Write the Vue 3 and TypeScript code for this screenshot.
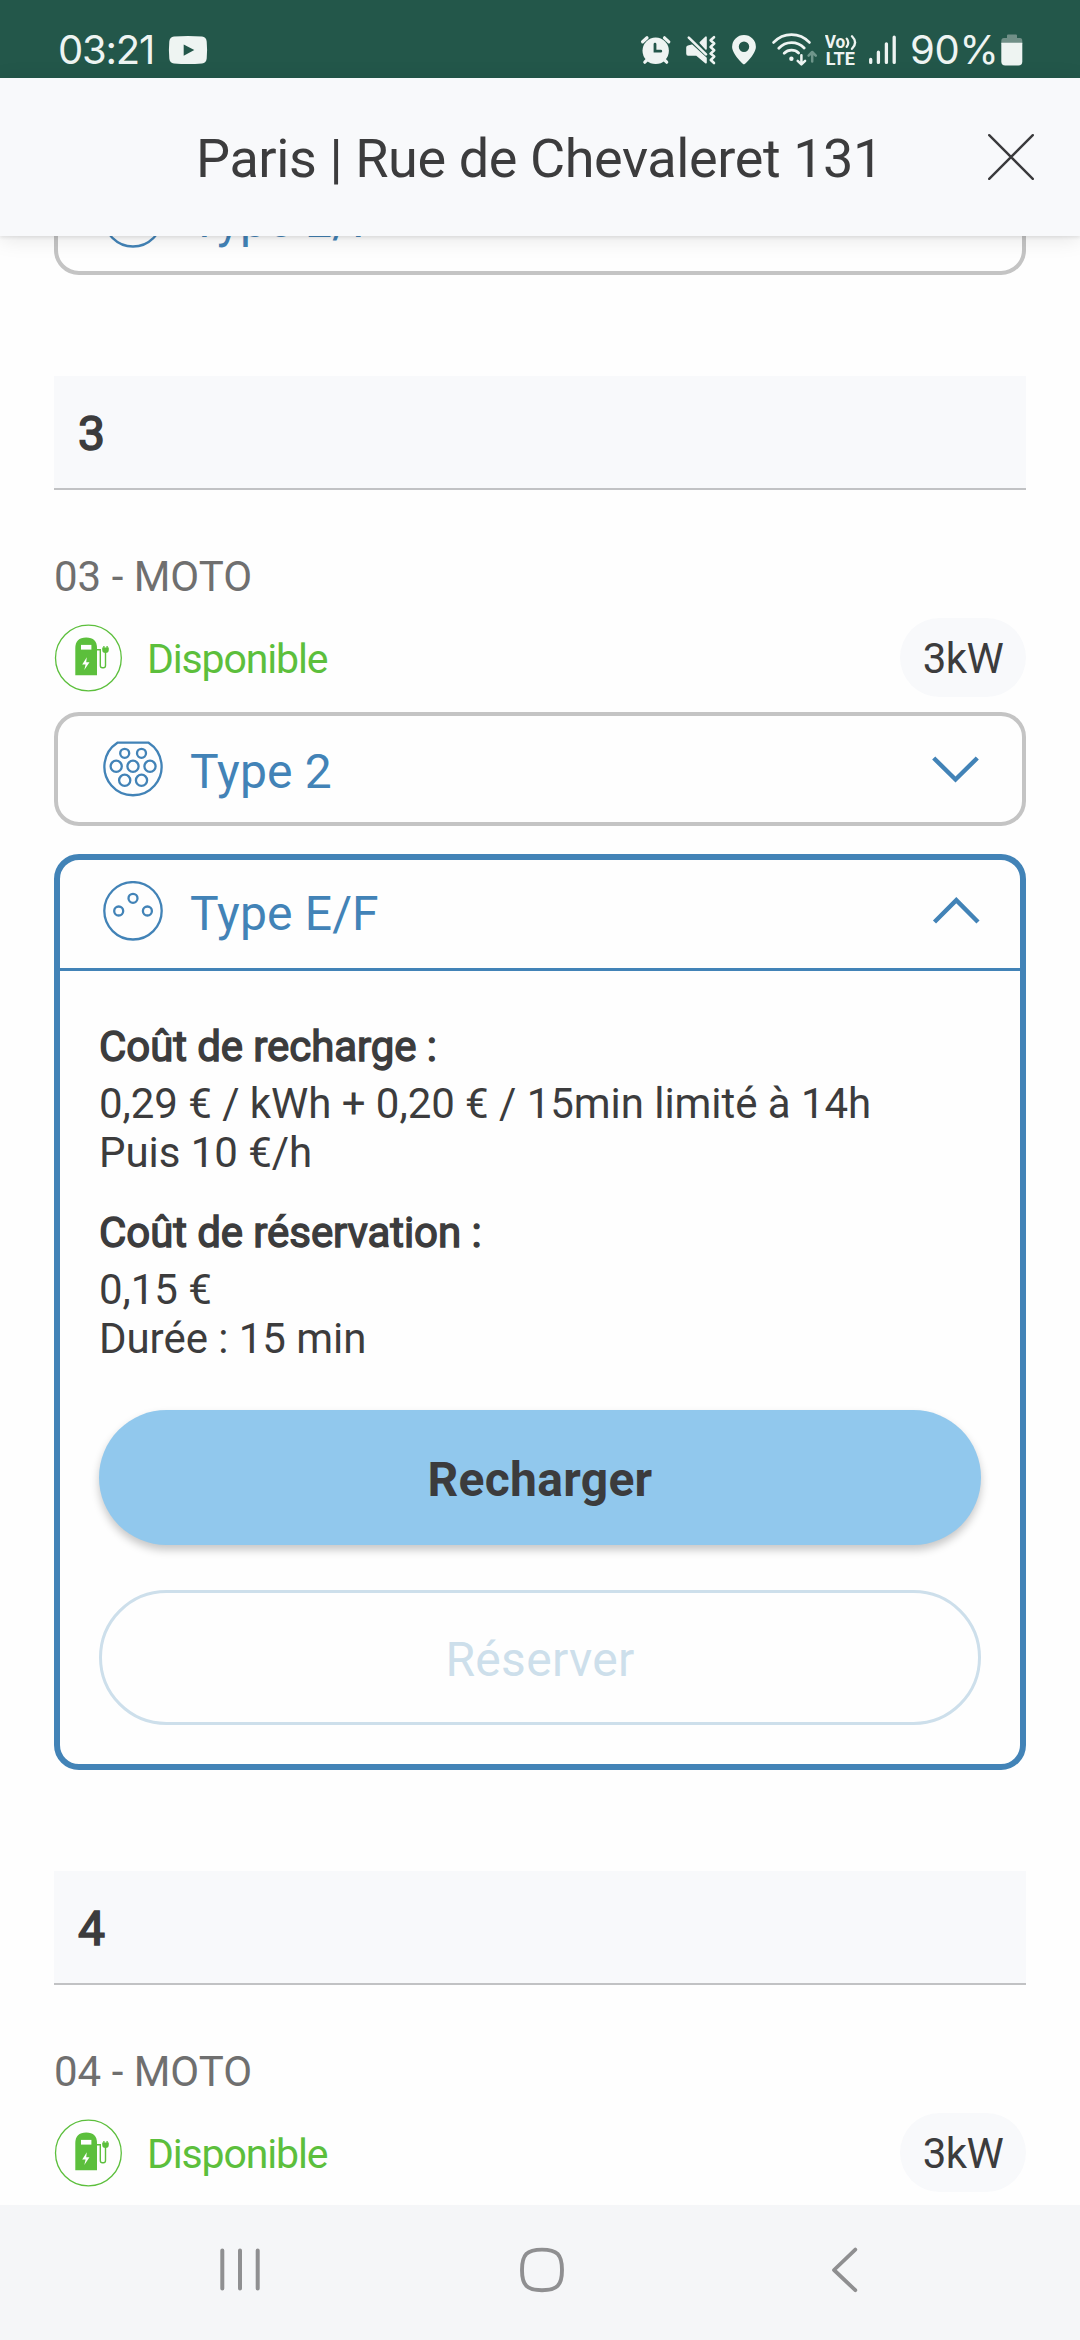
<script setup lang="ts">
import { ref } from 'vue'

interface Connector {
  id: string
  label: string
  kind: 'type2' | 'typeEF'
}

interface Station {
  number: string
  name: string
  status: string
  power: string
  connectors: Connector[]
}

const title = 'Paris | Rue de Chevaleret 131'
const openId = ref('3-ef')

const previous: Connector = { id: '2-ef', label: 'Type E/F', kind: 'typeEF' }

const stations: Station[] = [
  {
    number: '3',
    name: '03 - MOTO',
    status: 'Disponible',
    power: '3kW',
    connectors: [
      { id: '3-t2', label: 'Type 2', kind: 'type2' },
      { id: '3-ef', label: 'Type E/F', kind: 'typeEF' },
    ],
  },
  { number: '4', name: '04 - MOTO', status: 'Disponible', power: '3kW', connectors: [] },
]

function toggle(id: string) {
  openId.value = openId.value === id ? '' : id
}
</script>

<template>
  <div class="screen">
    <div class="statusbar">
      <span class="clock">03:21</span>
      <svg class="yt" width="40" height="30" viewBox="0 0 40 30">
        <path d="M6 1.6Q20 .2 34 1.6Q38.3 2 38.7 6.5Q39.5 15 38.7 23.5Q38.3 28 34 28.4Q20 29.6 6 28.4Q1.7 28 1.3 23.5Q.5 15 1.3 6.5Q1.7 2 6 1.6Z" fill="#eef4f2" />
        <path d="M15.7 9.6L26.3 15L15.7 20.8Z" fill="#23574a" />
      </svg>
      <div class="tray">
        <svg width="32" height="36" viewBox="0 0 32 36" fill="none" stroke="#eef4f2" stroke-linecap="round">
          <circle cx="15.7" cy="18.8" r="13.2" fill="#eef4f2" stroke="none" />
          <path d="M2.6 9.8L7 5.8M24.5 5.8L28.8 9.8M4.8 30.2L8 27M23.5 27L26.7 30.2" stroke-width="3.2" />
          <path d="M15 12.2V19.2H20.8" stroke="#23574a" stroke-width="2.8" />
        </svg>
        <svg class="g13" width="32" height="36" viewBox="0 0 32 36" fill="#eef4f2" stroke="#eef4f2" stroke-linecap="round" stroke-linejoin="round">
          <path d="M3 14.2L7 13.4L21 26V30.8L11.5 23H3Q2 23 2 21.5V15.5Q2 14.4 3 14.2Z" stroke-width="1.6" />
          <path d="M15.3 10.6L21 5.2V17Z" stroke-width="1.6" />
          <path d="M3.8 5.6L21 22.4" fill="none" stroke-width="2.6" />
          <path d="M29 5.2L25.6 8.2L29.2 11.5L25.6 15L29.2 18.2L25.6 21.6L29.2 24.6L25.8 28L29 31" fill="none" stroke-width="2.6" />
        </svg>
        <svg class="g15" width="24" height="36" viewBox="0 0 24 36">
          <path fill-rule="evenodd" fill="#eef4f2" d="M12 32.4C11 32.4 .1 22 .1 14.7A11.9 11.7 0 0 1 23.9 14.7C23.9 22 13 32.4 12 32.4ZM12 9.6A5.2 5.2 0 1 0 12 20A5.2 5.2 0 1 0 12 9.6Z" />
        </svg>
        <svg class="g15" width="46" height="36" viewBox="0 0 46 36" fill="none" stroke="#eef4f2" stroke-width="2.8" stroke-linecap="round" stroke-linejoin="round">
          <path d="M2.6 10.4Q10 2.6 20.5 2.6T38.4 10.4" />
          <path d="M7.8 16.2Q13 10.6 20.5 10.6T33.2 16" />
          <path d="M13.2 21.2Q16.2 18.2 20.5 18.2T27.6 21" />
          <circle cx="20.4" cy="26.7" r="2.2" fill="#eef4f2" stroke="none" />
          <path d="M30.4 23.2V32M26.7 28.8L30.4 32.4L34.1 28.8" stroke-width="2.5" />
          <path d="M41.2 29.6V20.4M37.6 23.6L41.2 20L44.8 23.6" stroke="#6f968b" stroke-width="2.5" />
        </svg>
        <svg class="g8" width="33" height="36" viewBox="0 0 33 36">
          <text x="-0.3" y="16.4" class="volte" textLength="20.6" lengthAdjust="spacingAndGlyphs">Vo</text>
          <text x="0.8" y="33" class="volte" textLength="29" lengthAdjust="spacingAndGlyphs">LTE</text>
          <path d="M21.7 6.6Q24.8 10.6 21.7 14.8M27 4.2Q33.2 10.4 27 16.8" fill="none" stroke="#eef4f2" stroke-width="2.3" stroke-linecap="round" />
        </svg>
        <svg class="g10" width="30" height="36" viewBox="0 0 30 36" stroke="#eef4f2" stroke-width="3.3" stroke-linecap="round">
          <path d="M2.7 27.4V30.4M10.4 20.2V30.4M18.4 11.8V30.4M26.2 5.2V30.4" />
        </svg>
        <span class="percent">90%</span>
        <svg width="22" height="36" viewBox="0 0 22 36">
          <path d="M6 3.5Q6 2.6 7 2.6H15Q16 2.6 16 3.5V6H19Q21.3 6 21.3 9V12H.3V9Q.3 6 3 6H6Z" fill="#708f87" />
          <path d="M.3 10.7H21.3V29.6Q21.3 33.6 17.3 33.6H4.3Q.3 33.6 .3 29.6Z" fill="#eef4f2" />
        </svg>
      </div>
    </div>

    <header class="header">
      <h1 class="title">{{ title }}</h1>
      <svg class="close" width="46" height="46" viewBox="0 0 46 46">
        <path d="M1.2 1.2L44.8 44.8M44.8 1.2L1.2 44.8" stroke="#3a3a3c" stroke-width="2.4" stroke-linecap="round" />
      </svg>
    </header>

    <main class="content">
      <div class="card clipped">
        <div class="card-head">
          <svg class="plug" width="60" height="60" viewBox="0 0 60 60"><circle cx="30" cy="29.8" r="28.7" /></svg>
          <span class="card-label">{{ previous.label }}</span>
        </div>
      </div>

      <section v-for="s in stations" :key="s.number" class="station">
        <h2 class="number">{{ s.number }}</h2>
        <div class="name">{{ s.name }}</div>
        <div class="state">
          <svg class="charger" width="68" height="68" viewBox="0 0 68 68" fill="none" stroke="#5cbf3c">
            <circle cx="34.4" cy="34" r="32.9" stroke-width="1.3" />
            <path d="M21.3 51.3V24.3Q21.3 13.5 32.2 13.5T43 24.3V51.3Z" fill="#5cbf3c" stroke="none" />
            <path d="M27 20.9H37.4V25.6H27Z" fill="#fff" stroke="none" />
            <path d="M32.8 33.2L28.2 40.4H31.6L30.3 46L35.5 38.2H32.2Z" fill="#fff" stroke="none" />
            <path d="M43 25.8H46.3V41.6Q46.3 43.8 48.4 43.8H49.4Q51.5 43.8 51.5 41.6V26" stroke-width="1.4" />
            <path d="M48.2 23.6H54.8V25.8Q54.8 29 51.5 29T48.2 25.8Z" fill="#5cbf3c" stroke="none" />
            <path d="M49.9 22V24.2M53.1 22V24.2" stroke-width="1.3" />
          </svg>
          <span class="status">{{ s.status }}</span>
          <span class="power">{{ s.power }}</span>
        </div>

        <div v-for="c in s.connectors" :key="c.id" class="card" :class="{ open: openId === c.id }">
          <div class="card-head" @click="toggle(c.id)">
            <svg v-if="c.kind === 'type2'" class="plug" width="60" height="60" viewBox="0 0 60 60">
              <path d="M14.4 3.7H45.6A28.6 28.6 0 1 1 14.4 3.7Z" />
              <circle cx="21.7" cy="14.3" r="4.5" /><circle cx="38.5" cy="14.3" r="4.5" />
              <circle cx="13.2" cy="27.3" r="5.6" /><circle cx="30" cy="27.3" r="5.6" /><circle cx="47" cy="27.3" r="5.6" />
              <circle cx="21.7" cy="41.3" r="5.6" /><circle cx="38.5" cy="41.3" r="5.6" />
            </svg>
            <svg v-else class="plug" width="60" height="60" viewBox="0 0 60 60">
              <circle cx="30" cy="29.8" r="28.7" />
              <circle cx="30" cy="17.3" r="4.5" /><circle cx="15.7" cy="30" r="4.5" /><circle cx="44.4" cy="30" r="4.5" />
            </svg>
            <span class="card-label">{{ c.label }}</span>
            <svg class="chevron" width="48" height="30" viewBox="0 0 48 30">
              <path v-if="openId === c.id" d="M2.5 26L24.3 4.2L46 26" />
              <path v-else d="M1.7 4L23.5 25.5L45.3 4" />
            </svg>
          </div>
          <div v-if="openId === c.id" class="card-body">
            <h3 class="cost-title">Coût de recharge :</h3>
            <p class="cost">0,29 € / kWh + 0,20 € / 15min limité à 14h<br>Puis 10 €/h</p>
            <h3 class="cost-title">Coût de réservation :</h3>
            <p class="cost">0,15 €<br>Durée : 15 min</p>
            <button class="btn primary" type="button">Recharger</button>
            <button class="btn outline" type="button" disabled>Réserver</button>
          </div>
        </div>
      </section>
    </main>

    <nav class="navbar">
      <svg width="44" height="46" viewBox="0 0 44 46" stroke="#8f8f91" stroke-width="4" stroke-linecap="round">
        <path d="M4.3 3.5V41.5M22 3.5V41.5M39.7 3.5V41.5" />
      </svg>
      <svg class="home" width="46" height="46" viewBox="0 0 46 46">
        <path d="M23 2.6C38 2.6 43 7.5 43 23S38 43.2 23 43.2S3 38.5 3 23S8 2.6 23 2.6Z" fill="none" stroke="#8f8f91" stroke-width="3.9" />
      </svg>
      <svg width="28" height="46" viewBox="0 0 28 46">
        <path d="M24.3 2.6L3 23L24.3 43.2" fill="none" stroke="#8f8f91" stroke-width="3.8" stroke-linecap="round" stroke-linejoin="round" />
      </svg>
    </nav>
  </div>
</template>

<style>
body {
  margin: 0;
  background: #fefefe;
}
</style>

<style scoped>
.screen {
  display: flex;
  flex-direction: column;
  width: 1080px;
  height: 2340px;
  overflow: hidden;
  background: #fefefe;
  color: #3c3c3d;
  font-family: Roboto, "Noto Sans", sans-serif;
}
svg {
  display: block;
  flex: none;
}

.statusbar {
  flex: none;
  box-sizing: border-box;
  height: 78px;
  padding: 22px 57px 0 58px;
  display: flex;
  align-items: center;
  background: #23574a;
  color: #eef4f2;
  font-family: Inter, Roboto, sans-serif;
  font-size: 40px;
  line-height: 56px;
}
.clock {
  width: 110px;
  letter-spacing: -1.2px;
}
.tray {
  display: flex;
  align-items: center;
  margin-left: auto;
}
.g8 { margin-left: 8px; }
.g10 { margin-left: 10px; }
.g13 { margin-left: 13px; }
.g15 { margin-left: 15px; }
.volte {
  font: 700 17.6px Roboto, sans-serif;
  fill: #eef4f2;
}
.percent {
  box-sizing: border-box;
  width: 103px;
  padding-left: 12px;
  letter-spacing: -0.3px;
}

.header {
  flex: none;
  position: relative;
  z-index: 1;
  box-sizing: border-box;
  height: 158px;
  padding: 0 46px 0 196px;
  display: flex;
  align-items: center;
  justify-content: space-between;
  background: #f8f9fb;
  box-shadow: 0 2px 3px rgba(0, 0, 0, 0.07), 0 3px 20px rgba(0, 0, 0, 0.1);
}
.title {
  margin: 3px 0 0;
  font-size: 54px;
  line-height: 64px;
  font-weight: 400;
  letter-spacing: -0.4px;
  white-space: nowrap;
}

.content {
  flex: 1;
  min-height: 0;
  overflow: hidden;
  padding: 0 54px;
}
.card {
  border: 4px solid #c4c4c4;
  border-radius: 25px;
}
.card.clipped {
  margin-top: -75px;
}
.card + .card {
  margin-top: 28px;
}
.card-head {
  display: flex;
  align-items: center;
  height: 106px;
  padding: 0 42px 0 45px;
  color: #4283b7;
}
.card-label {
  margin: 6px 0 0 27px;
  font-size: 48px;
  line-height: 56px;
  letter-spacing: 0.15px;
}
.plug {
  fill: none;
  stroke: #4283b7;
  stroke-width: 2.3;
}
.chevron {
  margin-left: auto;
  fill: none;
  stroke: #4283b7;
  stroke-width: 4.4;
}
.card.open {
  border: 6px solid #4283b7;
}
.open > .card-head {
  height: 102px;
  padding: 0 40px 6px 43px;
  border-bottom: 3px solid #4283b7;
}

.station {
  padding-top: 101px;
}
.number {
  box-sizing: border-box;
  height: 114px;
  margin: 0;
  padding-left: 24px;
  background: #f8f9fb;
  border-bottom: 2px solid #c1c2c4;
  font-size: 48px;
  line-height: 115px;
  font-weight: 400;
  -webkit-text-stroke: 1.6px #3c3c3d;
}
.name {
  margin-top: 62px;
  color: #6f6f6f;
  font-size: 42px;
  line-height: 49px;
}
.state {
  display: flex;
  align-items: center;
  height: 79px;
  margin: 17px 0 15px;
}
.charger {
  margin-top: 1px;
}
.status {
  margin: 3px 0 0 25px;
  color: #5cbf3c;
  font-size: 41px;
  line-height: 47px;
  letter-spacing: -1.15px;
}
.power {
  box-sizing: border-box;
  width: 126px;
  height: 79px;
  margin-left: auto;
  border-radius: 40px;
  background: #f8f9fb;
  font-size: 42px;
  line-height: 82px;
  text-align: center;
  letter-spacing: -0.5px;
}

.card-body {
  padding: 51px 39px 39px;
}
.cost-title,
.cost {
  margin: 0;
  font-size: 42px;
  line-height: 49px;
  white-space: nowrap;
}
.cost-title {
  font-weight: 400;
  letter-spacing: -0.08px;
  -webkit-text-stroke: 1.4px #3c3c3d;
}
.cost {
  margin-top: 8px;
  letter-spacing: -0.05px;
}
.cost + .cost-title {
  margin-top: 31px;
}
.btn {
  display: block;
  box-sizing: border-box;
  width: 100%;
  height: 135px;
  margin: 0;
  padding: 4px 0 0;
  border: none;
  border-radius: 68px;
  font: 400 48px/56px Roboto, sans-serif;
  letter-spacing: 0.3px;
}
.primary {
  margin-top: 47px;
  background: #91c8ed;
  color: #3c3c3d;
  font-weight: 700;
  box-shadow: 0 5px 9px rgba(0, 0, 0, 0.22);
}
.outline {
  margin-top: 45px;
  border: 3px solid #cddfeb;
  background: transparent;
  color: #cddfeb;
}

.navbar {
  flex: none;
  box-sizing: border-box;
  height: 135px;
  padding: 0 0 5px 218px;
  display: flex;
  align-items: center;
  background: #f5f6f8;
}
.home {
  margin: 0 266px 0 257px;
}
</style>
